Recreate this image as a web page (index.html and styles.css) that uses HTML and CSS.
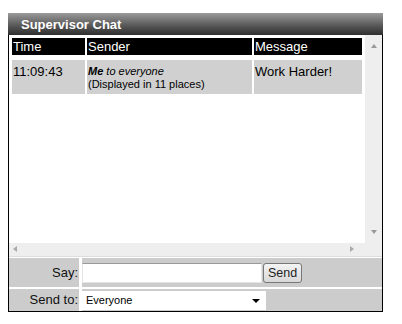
FILE: index.html
```html
<!DOCTYPE html>
<html lang="en">
<head>
    <meta charset="UTF-8">
    <title>Supervisor Chat</title>
    <link rel="stylesheet" href="styles.css">
</head>
<body>
    <div class="chat">
        <div class="title">Supervisor Chat</div>

        <div class="pane">
            <div class="log">
                <table class="messages">
                    <tr class="head">
                        <td class="c-time">Time</td>
                        <td class="c-sender">Sender</td>
                        <td class="c-msg">Message</td>
                    </tr>
                    <tr class="row">
                        <td>11:09:43</td>
                        <td class="small"><i><b>Me</b> to everyone</i><br>(Displayed in 11 places)</td>
                        <td>Work Harder!</td>
                    </tr>
                </table>
            </div>
            <div class="vbar">
                <span class="arrow up"></span>
                <span class="arrow down"></span>
            </div>
        </div>
        <div class="hbar">
            <span class="arrow left"></span>
            <span class="arrow right"></span>
        </div>

        <div class="form">
            <div class="line">
                <label class="lbl" for="say">Say:</label>
                <div class="field">
                    <input type="text" id="say" class="say">
                    <button type="button" class="send">Send</button>
                </div>
            </div>
            <div class="line">
                <label class="lbl" for="to">Send to:</label>
                <div class="field">
                    <div class="select" id="to">
                        <span>Everyone</span>
                        <span class="caret"></span>
                    </div>
                </div>
            </div>
        </div>
    </div>
</body>
</html>
```

FILE: styles.css
```css
body {
    margin: 0;
    padding: 13px 0 0 8px;
    background-color: #fff;
    font-family: "Liberation Sans", Arial, sans-serif;
    font-size: 13px;
    color: #000;
}

.chat {
    width: 373px;
    border: 1px solid #000;
    border-top: none;
}

.title {
    height: 22px;
    line-height: 23px;
    padding-left: 13px;
    margin: 0 -1px;
    background: linear-gradient(#9a9a9a, #555 60%, #2e2e2e);
    color: #fff;
    font-weight: bold;
    font-size: 13px;
}

.pane {
    display: flex;
    height: 208px;
}

.log {
    flex: 1;
    padding: 1px 0 0 1px;
}

.messages {
    border-collapse: separate;
    border-spacing: 2px;
    width: 354px;
}

.messages td {
    padding: 0 1px;
    vertical-align: top;
}

.head td {
    background-color: #000;
    background-clip: padding-box;
    border-bottom: 3px solid #fff;
    color: #fff;
    height: 17px;
    line-height: 17px;
}

.row td {
    background-color: #d0d0d0;
    height: 29px;
    padding-top: 4px;
}

.row td.small {
    font-size: 11px;
    line-height: 13px;
    padding-top: 5px;
}

.c-time { width: 71px; }
.c-sender { width: 163px; }

.vbar {
    position: relative;
    width: 17px;
    background-color: #eee;
}

.hbar {
    position: relative;
    height: 13px;
    background-color: #eee;
    border-bottom: 1px solid #ddd;
}

.arrow {
    position: absolute;
    width: 0;
    height: 0;
    border: 3px solid transparent;
}

.up { top: 9px; left: 6px; border-bottom: 4px solid #999; border-top: none; }
.down { bottom: 9px; left: 6px; border-top: 4px solid #999; border-bottom: none; }
.left { top: 3px; left: 4px; border-right: 4px solid #aaa; border-left: none; }
.right { top: 3px; right: 28px; border-left: 4px solid #aaa; border-right: none; }

.form {
    display: flex;
    flex-direction: column;
    gap: 2px;
    padding-top: 1px;
}

.line {
    display: flex;
    gap: 3px;
}

.lbl {
    width: 69px;
    padding-right: 1px;
    background-color: #ccc;
    text-align: right;
    color: #111;
}

.line:first-child .lbl { line-height: 29px; }
.line:last-child .lbl { line-height: 22px; }

.field {
    flex: 1;
    display: flex;
    align-items: center;
    background-color: #ccc;
}

.line:first-child .field { height: 29px; }
.line:last-child .field { height: 22px; }

.say {
    width: 178px;
    height: 18px;
    margin: 0;
    padding: 0;
    border: 1px solid #e4e4e4;
    border-top-color: #999;
    background-color: #fff;
}

.send {
    height: 20px;
    margin: 0 0 0 1px;
    padding: 0 4px;
    border: 1px solid #777;
    border-radius: 3px;
    background: linear-gradient(#f4f4f4, #d8d8d8);
    font-family: inherit;
    font-size: 12.5px;
    color: #222;
}

.select {
    position: relative;
    width: 180px;
    height: 19px;
    line-height: 19px;
    padding-left: 4px;
    background-color: #fff;
    font-size: 11px;
}

.caret {
    position: absolute;
    right: 6px;
    top: 8px;
    border: 4px solid transparent;
    border-top: 4px solid #000;
    border-bottom: none;
}
```
